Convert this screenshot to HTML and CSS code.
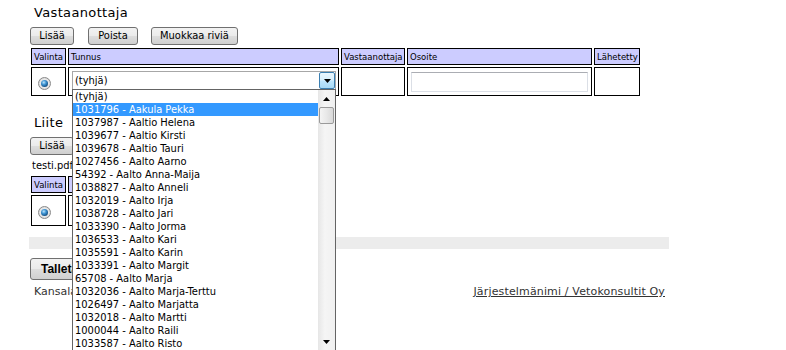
FILE: index.html
```html
<!DOCTYPE html>
<html lang="fi">
<head>
<meta charset="utf-8">
<title>Vastaanottaja</title>
<link rel="stylesheet" href="styles.css">
</head>
<body>
<div class="page">
  <h2 class="section-title section-title--first">Vastaanottaja</h2>
  <div class="btn-row">
    <button class="btn btn--add" type="button">Lisää</button>
    <button class="btn btn--del" type="button">Poista</button>
    <button class="btn btn--edit" type="button">Muokkaa riviä</button>
  </div>
  <table class="grid recipients">
    <thead>
      <tr>
        <th class="c-sel">Valinta</th>
        <th class="c-id">Tunnus</th>
        <th class="c-rec">Vastaanottaja</th>
        <th class="c-addr">Osoite</th>
        <th class="c-sent">Lähetetty</th>
      </tr>
    </thead>
    <tbody>
      <tr>
        <td class="c-sel"><span class="radio"></span></td>
        <td class="c-id cell-combo">
          <div class="combo">
            <span class="combo-value">(tyhjä)</span>
            <span class="combo-btn">
              <svg width="7" height="4" viewBox="0 0 7 4"><path d="M0 0h7L3.5 4z" fill="#000"/></svg>
            </span>
            <div class="dropdown">
              <ul class="options">
                <li>(tyhjä)</li>
                <li class="is-selected">1031796 - Aakula Pekka</li>
                <li>1037987 - Aaltio Helena</li>
                <li>1039677 - Aaltio Kirsti</li>
                <li>1039678 - Aaltio Tauri</li>
                <li>1027456 - Aalto Aarno</li>
                <li>54392 - Aalto Anna-Maija</li>
                <li>1038827 - Aalto Anneli</li>
                <li>1032019 - Aalto Irja</li>
                <li>1038728 - Aalto Jari</li>
                <li>1033390 - Aalto Jorma</li>
                <li>1036533 - Aalto Kari</li>
                <li>1035591 - Aalto Karin</li>
                <li>1033391 - Aalto Margit</li>
                <li>65708 - Aalto Marja</li>
                <li>1032036 - Aalto Marja-Terttu</li>
                <li>1026497 - Aalto Marjatta</li>
                <li>1032018 - Aalto Martti</li>
                <li>1000044 - Aalto Raili</li>
                <li>1033587 - Aalto Risto</li>
              </ul>
              <div class="scrollbar">
                <span class="sb-arrow">
                  <svg width="7" height="4" viewBox="0 0 7 4"><path d="M0 4h7L3.5 0z" fill="#000"/></svg>
                </span>
                <span class="sb-thumb"></span>
                <span class="sb-track"></span>
                <span class="sb-arrow">
                  <svg width="7" height="4" viewBox="0 0 7 4"><path d="M0 0h7L3.5 4z" fill="#000"/></svg>
                </span>
              </div>
            </div>
          </div>
        </td>
        <td class="c-rec"></td>
        <td class="c-addr cell-input"><input class="text-input" type="text"></td>
        <td class="c-sent"></td>
      </tr>
    </tbody>
  </table>

  <h2 class="section-title section-title--sub">Liite</h2>
  <div class="btn-row">
    <button class="btn btn--add" type="button">Lisää</button>
  </div>
  <div class="file-line">testi.pdf,</div>
  <table class="grid attachments">
    <thead>
      <tr>
        <th class="c-sel">Valinta</th>
        <th class="c-file"></th>
      </tr>
    </thead>
    <tbody>
      <tr class="row-tall">
        <td class="c-sel"><span class="radio"></span></td>
        <td class="c-file"></td>
      </tr>
    </tbody>
  </table>

  <div class="divider"></div>

  <div class="save-row">
    <button class="btn btn--save" type="button">Talleta</button>
  </div>

  <div class="footer">
    <span class="footer-left">Kansalaisviestintä</span>
    <a class="footer-link" href="#">Järjestelmänimi / Vetokonsultit Oy</a>
  </div>
</div>
</body>
</html>
```

FILE: styles.css
```css
* { box-sizing: border-box; }

html {
  overflow: hidden;
}

html, body {
  margin: 0;
  padding: 0;
  background: #fff;
}

body {
  min-height: 350px;
  font-family: "DejaVu Sans", Verdana, sans-serif;
  color: #000;
}

.page {
  width: 669px;
  padding: 4px 0 0 29px;
}

.section-title {
  margin: 0;
  padding-left: 5px;
  font: normal 13px/18px "DejaVu Sans", Verdana, sans-serif;
  letter-spacing: 0.35px;
  color: #000;
}

.section-title--sub {
  margin-top: 16px;
}

.btn-row {
  display: flex;
  gap: 13px;
  margin: 5px 0 0 1px;
}

.btn {
  height: 18px;
  padding: 0;
  font: 11px/16px "DejaVu Sans Condensed", "DejaVu Sans", sans-serif;
  font-stretch: condensed;
  color: #000;
  text-align: center;
  border: 1px solid #707070;
  border-radius: 3px;
  background: linear-gradient(#f2f2f2 0%, #ebebeb 48%, #dddddd 52%, #cfcfcf 100%);
}

.btn--add { width: 44px; }
.btn--del { width: 50px; margin-left: 1px; }
.btn--edit { width: 87px; }

.btn--save {
  height: 22px;
  padding: 0 10px;
  font: bold 12px/20px "Liberation Sans", Arial, sans-serif;
  font-stretch: normal;
}

/* tables */
.grid {
  border-collapse: separate;
  border-spacing: 2px;
  table-layout: fixed;
}

.recipients {
  width: 613px;
  margin-top: 1px;
}

.attachments {
  width: 271px;
}

.grid th,
.grid td {
  border: 1px solid #000;
  padding: 0;
}

.grid th {
  height: 17px;
  padding-left: 2px;
  background: #ccccff;
  font: normal 8.5px/12px "DejaVu Sans", Verdana, sans-serif;
  text-align: left;
  vertical-align: middle;
  white-space: nowrap;
  overflow: hidden;
}

.grid td {
  height: 29px;
  vertical-align: middle;
}

.row-tall td {
  height: 31px;
}

.c-sel { width: 35px; }
.c-id { width: 271px; }
.c-rec { width: 64px; }
.c-addr { width: 185px; }
.c-sent { width: 46px; }
.c-file { width: 230px; }

/* radio */
.radio {
  position: relative;
  display: block;
  width: 13px;
  height: 13px;
  margin: 3px 0 0 6px;
  border: 1px solid #8a8a8a;
  border-radius: 50%;
  background: radial-gradient(circle at 50% 50%, #ffffff 0, #e8e8e8 55%, #c4c4c4 100%);
}

.radio::after {
  content: "";
  position: absolute;
  left: 2px;
  top: 2px;
  width: 7px;
  height: 7px;
  border-radius: 50%;
  background: radial-gradient(circle at 40% 35%, #bfe6fb 0, #3f95d4 35%, #165286 72%, #0c3960 100%);
}

/* combo */
.cell-combo {
  vertical-align: top !important;
  padding: 3px 2px 0 3px !important;
}

.combo {
  position: relative;
  display: flex;
  align-items: center;
  height: 19px;
  border: 1px solid #a7a7a7;
  background: #fff;
}

.combo-value {
  flex: 1;
  padding-left: 2px;
  font: 11px/15px "DejaVu Sans Condensed", "DejaVu Sans", sans-serif;
  font-stretch: condensed;
}

.combo-btn {
  display: flex;
  align-items: center;
  justify-content: center;
  width: 16px;
  height: 17px;
  border: 1px solid #3c7fb1;
  border-radius: 2px;
  background: linear-gradient(#eaf6fd 0%, #d9f0fc 48%, #bee6fd 52%, #a7d9f5 100%);
}

.dropdown {
  position: absolute;
  left: -1px;
  top: 17px;
  z-index: 10;
  display: flex;
  width: 264px;
  height: 261px;
  border: 1px solid #646464;
  border-bottom: 0;
  background: #fff;
}

.options {
  flex: 1;
  margin: 0;
  padding: 0;
  list-style: none;
  overflow: hidden;
}

.options li {
  height: 13px;
  padding-left: 2px;
  font: 11px/13px "DejaVu Sans Condensed", "DejaVu Sans", sans-serif;
  font-stretch: condensed;
  white-space: nowrap;
  color: #000;
}

.options li.is-selected {
  background: #3399ff;
  color: #fff;
}

.scrollbar {
  display: flex;
  flex-direction: column;
  width: 17px;
  background: linear-gradient(to right, #e6e6e6, #f5f5f5 40%, #f0f0f0);
}

.sb-arrow {
  display: flex;
  align-items: center;
  justify-content: center;
  height: 17px;
  flex: none;
}

.sb-thumb {
  flex: none;
  height: 17px;
  margin: 0 1px;
  border: 1px solid #9a9a9a;
  border-radius: 2px;
  background: linear-gradient(to right, #f4f4f4, #e8e8e8 50%, #d9d9d9 100%);
}

.sb-track {
  flex: 1;
}

/* text input */
.cell-input {
  vertical-align: top !important;
  padding: 4px 3px 0 3px !important;
}

.text-input {
  display: block;
  width: 100%;
  height: 20px;
  margin: 0;
  padding: 0 2px;
  border: 1px solid #dbdfe6;
  border-top-color: #abadb3;
  background: #fff;
  font: 11px "DejaVu Sans Condensed", "DejaVu Sans", sans-serif;
}

/* attachment line */
.file-line {
  height: 19px;
  padding: 3px 0 0 3px;
  font: 11px/16px "DejaVu Sans Condensed", "DejaVu Sans", sans-serif;
  font-stretch: condensed;
}

.divider {
  width: 640px;
  height: 12px;
  margin-top: 9px;
  background: #ececec;
}

.save-row {
  display: flex;
  margin: 9px 0 0 1px;
}

.footer {
  display: flex;
  justify-content: space-between;
  width: 640px;
  margin-top: 5px;
  padding: 0 4px 0 5px;
  font: 11px/14px "DejaVu Sans", Verdana, sans-serif;
  color: #333;
}

.footer-link {
  color: #333;
  text-decoration: underline;
  letter-spacing: 0.15px;
}
```
